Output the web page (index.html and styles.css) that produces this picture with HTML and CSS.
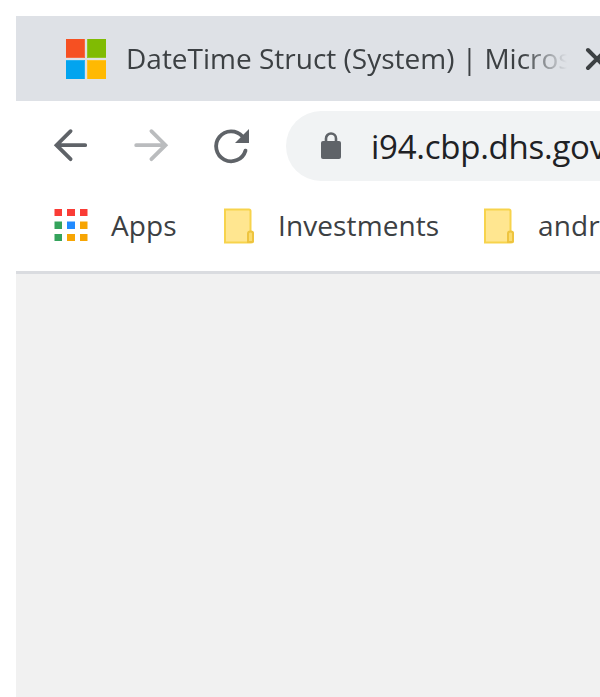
FILE: index.html
```html
<!DOCTYPE html>
<html lang="en">
<head>
<meta charset="utf-8">
<title>Browser window</title>
<link rel="stylesheet" href="styles.css">
</head>
<body>
<div class="window">
  <header class="tab">
    <svg class="favicon" viewBox="0 0 40 40"><path fill="#f65022" d="M0 0h19v19H0z"/><path fill="#80bb03" d="M21 0h19v19H21z"/><path fill="#02a4ef" d="M0 21h19v19H0z"/><path fill="#ffb902" d="M21 21h19v19H21z"/><path fill="none" stroke="#fff" stroke-opacity=".15" d="M18.5 0v18.5H0M21.5 0v18.5H40M18.5 40V21.5H0M21.5 40V21.5H40"/></svg>
    <div class="tab-title"><span class="title-text">DateTime Struct (System) | Micros</span></div>
    <svg class="close" viewBox="0 0 22 22"><path d="M2 2l18 18M20 2L2 20"/></svg>
  </header>
  <nav class="toolbar">
    <svg class="nav-icon back" viewBox="0 0 34 34"><path d="M31.2 17.2H3M16.6 3.2L2.5 17.2l14.1 14"/></svg>
    <svg class="nav-icon forward" viewBox="0 0 34 34"><path d="M2.2 17.2h28M17.4 3.2l14.1 14-14.1 14"/></svg>
    <svg class="nav-icon reload" viewBox="0 0 34 34"><path d="M31.500 22.6A15 15 0 1 1 28.500 8.500"/><path class="head" d="M35 1v14H21z"/></svg>
    <div class="address">
      <svg class="lock" viewBox="0 0 20 28"><rect y="9" width="20" height="18" rx="2"/><path d="M5 10V6.5a5 5 0 0 1 10 0V10"/></svg>
      <span class="url">i94.cbp.dhs.gov</span>
    </div>
  </nav>
  <div class="bookmarks">
    <svg class="apps" viewBox="0 0 34 34"><path fill="#fa3c36" d="M.5 1H8v7H.5zM13 1h8v7h-8zM26 1h7.500v7H26z"/><path fill="#35a35c" d="M.5 13.500H8V21H.5zM.5 26H8v7H.5z"/><path fill="#218bff" d="M13 13.500h8V21h-8z"/><path fill="#f7a503" d="M26 13.500h7.500V21H26zM13 26h8v7h-8zM26 26h7.500v7H26z"/></svg>
    <span class="label apps-label">Apps</span>
    <svg class="folder" viewBox="0 0 30 36"><path d="M1 1.500h24q1.500 0 1.500 1.500v20.500q2.500 0 2.500 2V33q0 1.500-2 1.500H1z"/><path class="fold" d="M24 34v-8.500q0-2 2.500-2t2.500 2V33q0 1-2 1z"/></svg>
    <span class="label investments-label">Investments</span>
    <svg class="folder" viewBox="0 0 30 36"><path d="M1 1.500h24q1.500 0 1.500 1.500v20.500q2.500 0 2.500 2V33q0 1.500-2 1.500H1z"/><path class="fold" d="M24 34v-8.500q0-2 2.500-2t2.500 2V33q0 1-2 1z"/></svg>
    <span class="label">andr</span>
  </div>
  <main class="page"></main>
</div>
</body>
</html>
```
FILE: styles.css
```css
* { box-sizing: border-box; }
body {
  margin: 0;
  background: #fff;
  font-family: "Open Sans", sans-serif;
  font-weight: 370;
  color: #3c4043;
  overflow: hidden;
}
svg { flex: none; display: block; overflow: visible; }
.window {
  height: 697px;
  padding: 16px 0 0 16px;
  display: flex;
  flex-direction: column;
  overflow: hidden;
}
.tab {
  flex: none;
  height: 85px;
  background: #dee1e6;
  display: flex;
  align-items: center;
  padding-left: 50px;
  overflow: hidden;
}
.favicon { width: 40px; height: 40px; }
.tab-title {
  flex: none;
  width: 441px;
  margin: 0 19px 2px 20px;
  white-space: nowrap;
  font-size: 28px;
  line-height: 44px;
  -webkit-mask-image: linear-gradient(to right, #000 396px, transparent 441px);
  mask-image: linear-gradient(to right, #000 396px, transparent 441px);
}
.close { width: 22px; height: 22px; }
.close path { stroke: #3c4043; stroke-width: 4; stroke-linecap: round; }
.toolbar {
  flex: none;
  height: 90px;
  display: flex;
  align-items: center;
  padding-left: 38px;
  overflow: hidden;
}
.nav-icon {
  width: 34px;
  height: 34px;
  margin: 0 46px 2px 0;
  fill: none;
  stroke: #5f6368;
  stroke-width: 3.8;
  stroke-linecap: round;
}
.forward { stroke: #babcbe; }
.reload { margin-right: 38px; }
.reload .head { fill: #5f6368; stroke: none; }
.address {
  flex: none;
  width: 500px;
  height: 70px;
  border-radius: 35px;
  background: #f1f3f4;
  display: flex;
  align-items: center;
  padding-left: 35px;
}
.lock { width: 20px; height: 28px; fill: #5f6368; }
.lock path { fill: none; stroke: #5f6368; stroke-width: 2.6; }
.url {
  margin: 2px 0 0 30px;
  font-size: 33px;
  line-height: 48px;
  letter-spacing: -0.25px;
  color: #202124;
  white-space: nowrap;
}
.bookmarks {
  flex: none;
  height: 83px;
  padding: 0 0 11px 38px;
  border-bottom: 3px solid #dadce0;
  display: flex;
  align-items: center;
  overflow: hidden;
}
.apps { width: 34px; height: 34px; margin-bottom: 1px; }
.label {
  flex: none;
  margin: 0 0 1px 24px;
  font-size: 28px;
  line-height: 40px;
  letter-spacing: 0.1px;
  white-space: nowrap;
}
.apps-label { width: 113px; margin-left: 23px; }
.investments-label { width: 206px; }
.folder { width: 30px; height: 36px; margin-top: 1px; }
.folder path { fill: #ffe690; stroke: #f7d34c; stroke-width: 2; }
.folder .fold { fill: #fbdc70; stroke: #eec43f; }
.page { flex: 1; background: #f1f1f1; }
```
